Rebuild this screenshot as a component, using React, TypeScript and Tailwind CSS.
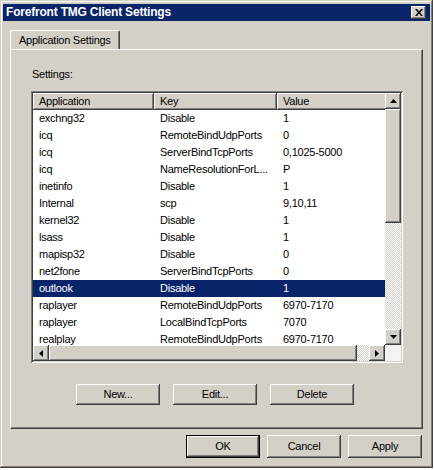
const raised =
  "bg-[#d4d0c8] shadow-[inset_-1px_-1px_#404040,inset_1px_1px_#ffffff,inset_-2px_-2px_#808080]";

const rows: { app: string; key: string; value: string; selected?: boolean }[] = [
  { app: "exchng32", key: "Disable", value: "1" },
  { app: "icq", key: "RemoteBindUdpPorts", value: "0" },
  { app: "icq", key: "ServerBindTcpPorts", value: "0,1025-5000" },
  { app: "icq", key: "NameResolutionForL...", value: "P" },
  { app: "inetinfo", key: "Disable", value: "1" },
  { app: "Internal", key: "scp", value: "9,10,11" },
  { app: "kernel32", key: "Disable", value: "1" },
  { app: "lsass", key: "Disable", value: "1" },
  { app: "mapisp32", key: "Disable", value: "0" },
  { app: "net2fone", key: "ServerBindTcpPorts", value: "0" },
  { app: "outlook", key: "Disable", value: "1", selected: true },
  { app: "raplayer", key: "RemoteBindUdpPorts", value: "6970-7170" },
  { app: "raplayer", key: "LocalBindTcpPorts", value: "7070" },
  { app: "realplay", key: "RemoteBindUdpPorts", value: "6970-7170" },
];

function Arrow({ dir }: { dir: "up" | "down" | "left" | "right" }) {
  const pts = {
    up: "0,4 7,4 3.5,0",
    down: "0,0 7,0 3.5,4",
    left: "4,0 4,7 0,3.5",
    right: "0,0 0,7 4,3.5",
  }[dir];
  const vertical = dir === "up" || dir === "down";
  return (
    <svg width={vertical ? 7 : 4} height={vertical ? 4 : 7} viewBox={vertical ? "0 0 7 4" : "0 0 4 7"}>
      <polygon points={pts} fill="#000" />
    </svg>
  );
}

function ScrollButton({ dir }: { dir: "up" | "down" | "left" | "right" }) {
  return (
    <div className={`w-[16px] h-[16px] shrink-0 flex items-center justify-center ${raised}`}>
      <Arrow dir={dir} />
    </div>
  );
}

const track =
  "bg-[image:repeating-conic-gradient(#d4d0c8_0_25%,#ffffff_0_50%)] bg-[length:2px_2px]";

function PushButton({ label, isDefault }: { label: string; isDefault?: boolean }) {
  if (isDefault) {
    return (
      <div className="w-[74px] h-[23px] border border-black">
        <div className={`w-full h-full flex items-center justify-center ${raised}`}>{label}</div>
      </div>
    );
  }
  return <div className={`w-[74px] h-[23px] flex items-center justify-center ${raised}`}>{label}</div>;
}

export default function App() {
  return (
    <div className="w-[434px] h-[470px] bg-white text-[11px] leading-[13px] text-black tracking-[-0.25px] [font-family:'Liberation_Sans',Arial,sans-serif]">
      <div className="w-[433px] h-[468px] bg-[#d4d0c8] pt-[4px] px-[3px] flex flex-col shadow-[inset_-1px_-1px_#404040,inset_1px_1px_#d4d0c8,inset_-2px_-2px_#808080,inset_2px_2px_#ffffff]">
        {/* Title bar */}
        <div className="h-[17px] bg-[#0a246a] flex items-center justify-between pl-[3px] pr-[4px]">
          <span className="text-white font-bold text-[12px] tracking-[-0.2px]">Forefront TMG Client Settings</span>
          <div className={`w-[15px] h-[13px] flex items-center justify-center ${raised}`}>
            <svg width="8" height="7" viewBox="0 0 8 7">
              <path d="M0 0h2l2 2.5L6 0h2L5 3.5 8 7H6L4 4.5 2 7H0l3-3.5z" fill="#000" />
            </svg>
          </div>
        </div>

        {/* Tab strip */}
        <div className="mt-[9px] ml-[7px] flex">
          <div className="h-[20px] px-[8px] -mb-[1px] bg-[#d4d0c8] border-l border-t border-white rounded-t-[2px] shadow-[inset_-1px_0_#808080] border-r border-r-[#404040] flex items-center">
            Application Settings
          </div>
        </div>

        {/* Tab panel */}
        <div className="ml-[7px] w-[413px] h-[380px] border-l border-t border-white border-r border-b border-r-[#404040] border-b-[#404040] shadow-[inset_-1px_-1px_#808080] pt-[18px] px-[20px]">
          <div className="pl-[1px]">Settings:</div>

          {/* List view */}
          <div className="mt-[10px] w-[372px] h-[272px] p-[2px] bg-white shadow-[inset_1px_1px_#808080,inset_-1px_-1px_#ffffff,inset_2px_2px_#404040,inset_-2px_-2px_#d4d0c8]">
            <div className="flex h-[252px]">
              <div className="w-[352px] flex flex-col overflow-hidden">
                <div className="flex h-[17px] shrink-0">
                  <div className={`w-[121px] shrink-0 pl-[6px] flex items-center ${raised}`}>Application</div>
                  <div className={`w-[123px] shrink-0 pl-[6px] flex items-center ${raised}`}>Key</div>
                  <div className={`w-[130px] shrink-0 pl-[6px] flex items-center ${raised}`}>Value</div>
                </div>
                <div className="flex-1 overflow-hidden">
                  {rows.map((r, i) => (
                    <div
                      key={i}
                      className={`flex h-[17px] items-center ${r.selected ? "bg-[#0a246a] text-white" : ""}`}
                    >
                      <div className="w-[121px] shrink-0 pl-[6px]">{r.app}</div>
                      <div className="w-[123px] shrink-0 pl-[6px] whitespace-nowrap">{r.key}</div>
                      <div className="flex-1 pl-[6px] whitespace-nowrap">{r.value}</div>
                    </div>
                  ))}
                </div>
              </div>
              {/* Vertical scrollbar */}
              <div className="w-[16px] flex flex-col">
                <ScrollButton dir="up" />
                <div className={`h-[114px] shrink-0 ${raised}`} />
                <div className={`flex-1 ${track}`} />
                <ScrollButton dir="down" />
              </div>
            </div>
            {/* Horizontal scrollbar */}
            <div className="flex h-[16px]">
              <ScrollButton dir="left" />
              <div className={`w-[308px] shrink-0 ${raised}`} />
              <div className={`flex-1 ${track}`} />
              <ScrollButton dir="right" />
              <div className="w-[16px] bg-[#f4f3f0]" />
            </div>
          </div>

          {/* Buttons */}
          <div className="mt-[21px] pl-[45px] flex gap-[13px]">
            <div className={`w-[84px] h-[21px] flex items-center justify-center ${raised}`}>New...</div>
            <div className={`w-[84px] h-[21px] flex items-center justify-center ${raised}`}>Edit...</div>
            <div className={`w-[84px] h-[21px] flex items-center justify-center ${raised}`}>Delete</div>
          </div>
        </div>

        {/* Dialog buttons */}
        <div className="mt-[6px] flex justify-end gap-[7px] pr-[8px]">
          <PushButton label="OK" isDefault />
          <PushButton label="Cancel" />
          <PushButton label="Apply" />
        </div>
      </div>
    </div>
  );
}
